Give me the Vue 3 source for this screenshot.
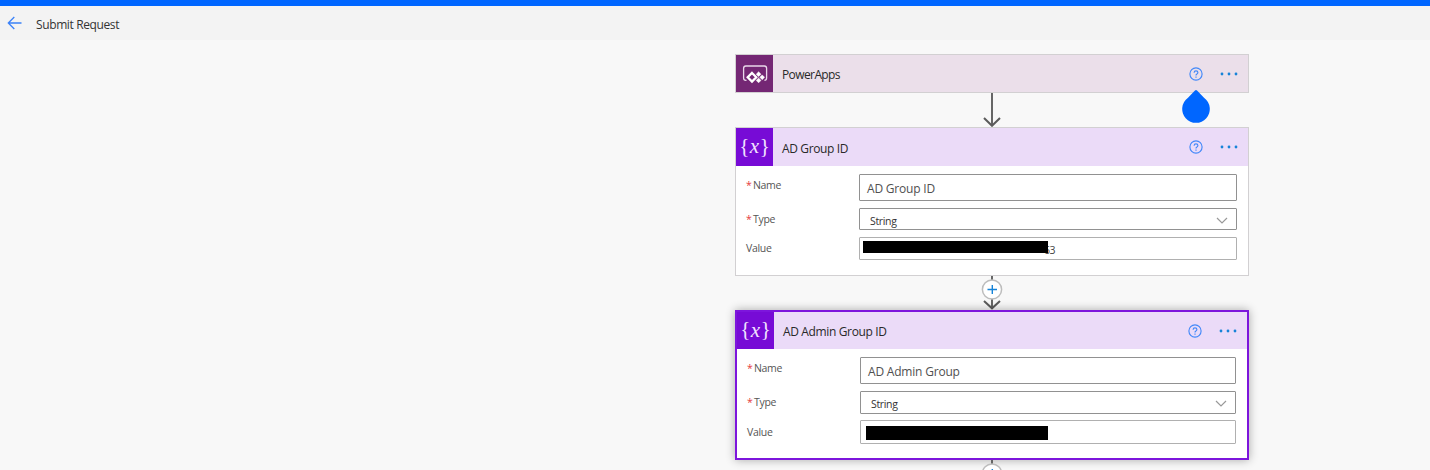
<script setup>
const variables = [
  { title: 'AD Group ID', name: 'AD Group ID', type: 'String', tail: '63', selected: false },
  { title: 'AD Admin Group ID', name: 'AD Admin Group', type: 'String', tail: '', selected: true },
]
</script>

<template>
  <div class="page">
    <div class="accent"></div>
    <header class="topbar">
      <svg class="back" width="16" height="14" viewBox="0 0 16 14">
        <path d="M7.3 1 L1.3 7 L7.3 13 M1.3 7 H14.5" />
      </svg>
      <span class="page-title">Submit Request</span>
    </header>

    <main class="flow">
      <section class="card trigger">
        <div class="head">
          <div class="tile">
            <svg width="38" height="38" viewBox="0 0 38 38">
              <path class="frame" d="M10.5 25.3 H9.8 Q7.6 25.3 7.6 23 V13.3 Q7.6 11 9.8 11 H28.4 Q30.6 11 30.6 13.3 V23 Q30.6 25.3 28.4 25.3" />
              <path class="diamond" d="M16 18 L20.3 22.3 L16 26.6 L11.7 22.3 Z" />
              <path class="chips" d="M22.6 16.8 L25 19.2 L22.6 21.6 L20.2 19.2 Z M26.2 19.9 L28.6 22.3 L26.2 24.7 L23.8 22.3 Z M22.6 23 L25 25.4 L22.6 27.8 L20.2 25.4 Z" />
            </svg>
          </div>
          <span class="title">PowerApps</span>
          <span class="help">
            <svg width="14" height="14" viewBox="0 0 14 14">
              <circle cx="7" cy="7" r="6.1" />
              <path d="M5.1 5.7 Q5.1 3.8 7 3.8 Q8.9 3.8 8.9 5.4 Q8.9 6.3 7.9 6.9 Q7 7.4 7 8.5 M7 9.5 V10.7" />
            </svg>
            <svg class="pin" width="28" height="34" viewBox="0 0 28 34">
              <path d="M14 0 Q15 0 16 1.6 L22 7.8 A13.8 13.8 0 1 1 6 7.8 L12 1.6 Q13 0 14 0 Z" />
            </svg>
          </span>
          <svg class="dots" width="18" height="4" viewBox="0 0 18 4">
            <circle cx="2" cy="2" r="1.4" /><circle cx="9" cy="2" r="1.4" /><circle cx="16" cy="2" r="1.4" />
          </svg>
        </div>
      </section>

      <svg class="link" width="20" height="34" viewBox="0 0 20 34">
        <path class="line" d="M10 0 V32.5" /><path class="tip" d="M2 25 L10 32.8 L18 25" />
      </svg>

      <template v-for="(v, i) in variables" :key="v.title">
        <svg v-if="i > 0" class="link" width="22" height="34" viewBox="0 0 22 34">
          <path class="line" d="M11 0 V32" /><path class="tip" d="M3 25 L11 32.3 L19 25" />
          <circle class="ring" cx="11" cy="13.5" r="9.6" />
          <path class="plus" d="M6.5 13.5 H16 M11.3 9 V18" />
        </svg>
        <section class="card variable" :class="{ selected: v.selected }">
          <div class="head">
            <div class="tile"><span class="brace">{</span><i>x</i><span class="brace">}</span></div>
            <span class="title">{{ v.title }}</span>
            <span class="help">
              <svg width="14" height="14" viewBox="0 0 14 14">
                <circle cx="7" cy="7" r="6.1" />
                <path d="M5.1 5.7 Q5.1 3.8 7 3.8 Q8.9 3.8 8.9 5.4 Q8.9 6.3 7.9 6.9 Q7 7.4 7 8.5 M7 9.5 V10.7" />
              </svg>
            </span>
            <svg class="dots" width="18" height="4" viewBox="0 0 18 4">
              <circle cx="2" cy="2" r="1.4" /><circle cx="9" cy="2" r="1.4" /><circle cx="16" cy="2" r="1.4" />
            </svg>
          </div>
          <div class="body">
            <label class="name-label"><b>*</b>Name</label>
            <div class="box name">{{ v.name }}</div>
            <label><b>*</b>Type</label>
            <div class="box type">
              <span>{{ v.type }}</span>
              <svg width="12" height="7" viewBox="0 0 12 7"><path d="M1 1 L6 6 L11 1" /></svg>
            </div>
            <label class="value-label">Value</label>
            <div class="box value"><span class="redacted"></span><span class="tail">{{ v.tail }}</span></div>
          </div>
        </section>
      </template>

      <svg class="link last" width="22" height="34" viewBox="0 0 22 34">
        <path class="line" d="M11 0 V32" />
        <circle class="ring" cx="11" cy="13.5" r="9.6" />
        <path class="plus" d="M6.5 13.5 H16 M11.3 9 V18" />
      </svg>
    </main>
  </div>
</template>

<style>
body { background: #f8f8f8; overflow: hidden; }
</style>

<style scoped>
* { box-sizing: border-box; }
.page { height: 470px; overflow: hidden; background: #f8f8f8; font-family: "Open Sans", "Noto Sans", sans-serif; color: #333; }
svg { display: block; flex: none; fill: none; }
.accent { height: 6px; background: #0066ff; }
.topbar { height: 34px; background: #f3f3f3; display: flex; align-items: center; padding-left: 7px; }
.back { stroke: #3b82f8; stroke-width: 1.3; margin-bottom: 1px; }
.page-title { margin: 2px 0 0 13px; font-size: 12px; letter-spacing: -0.38px; }
.flow { width: 514px; margin-left: 735px; padding-top: 14px; display: flex; flex-direction: column; align-items: center; }
.card { width: 514px; flex: none; border: 1px solid #d2d0d2; background: #fff; }
.trigger { height: 39px; }
.variable { height: 149px; }
.head { height: 38px; display: flex; align-items: center; background: #ebdbf8; }
.trigger .head { height: 37px; background: #ebdfea; }
.tile { width: 37px; height: 100%; flex: none; display: flex; align-items: center; justify-content: center; background: #770bd6; color: #f2e4ff; font-family: "Liberation Serif", serif; line-height: 36px; }
.trigger .tile { background: #742774; }
.tile i { font-size: 21px; margin: 0 0.5px; padding-bottom: 2px; }
.brace { font-size: 21px; padding-bottom: 3px; }
.frame { stroke: #e9d8e9; stroke-width: 1.3; }
.diamond { fill: #742774; stroke: #fff; stroke-width: 2.3; }
.chips { fill: #fff; stroke: #fff; stroke-width: 0.5; }
.title { flex: 1; margin-left: 9px; padding-top: 2px; font-size: 12px; letter-spacing: -0.37px; white-space: nowrap; color: #292929; }
.trigger .title { letter-spacing: -0.6px; }
.help { position: relative; margin-right: 17px; stroke: #4288f9; stroke-width: 1.15; }
.pin { position: absolute; left: -7px; top: 23px; z-index: 2; fill: #0066ff; stroke: none; }
.dots { margin-right: 10px; fill: #1683d8; }
.link { position: relative; height: 34px; }
.line { stroke: #666; stroke-width: 2; }
.tip { stroke: #5b5b5b; stroke-width: 2; }
.ring { fill: #fff; stroke: #bdbdbd; stroke-width: 1.5; }
.plus { stroke: #1683d8; stroke-width: 1.4; }
.body { display: grid; grid-template-columns: 113px 378px; grid-template-rows: 27px 22px 23px; row-gap: 7px; padding: 8px 0 0 10px; align-items: center; }
label { font-size: 10.5px; letter-spacing: -0.3px; color: #555; }
.name-label { padding-bottom: 5px; }
.value-label { padding-bottom: 1px; }
label b { color: #e5393d; font-weight: 400; margin-right: 1.5px; }
.box { height: 100%; border: 1px solid #919191; border-radius: 1px; display: flex; align-items: center; background: #fff; }
.name { padding: 2px 0 0 7px; font-size: 12px; letter-spacing: -0.2px; color: #505050; }
.type { justify-content: space-between; padding: 3px 8px 0 10px; font-size: 10.5px; letter-spacing: -0.35px; color: #333; }
.type svg { stroke: #999; stroke-width: 1.2; }
.value { border-color: #b0b0b0; padding-left: 3px; font-size: 10.5px; }
.redacted { width: 185px; height: 12px; background: #000; margin-bottom: 3px; z-index: 1; }
.tail { margin-left: -4px; padding-top: 2px; letter-spacing: -0.6px; color: #444; }
.selected { height: 150px; border: 2px solid #7d15dc; box-shadow: 0 0 9px rgba(0, 0, 0, 0.32); position: relative; }
.selected .head { height: 37px; }
.selected .title { letter-spacing: -0.36px; }
.selected .body { grid-template-columns: 113px 376px; grid-template-rows: 27px 23px 24px; row-gap: 6.5px; }
.selected .redacted { width: 182px; height: 14px; margin: 2px 0 0 2px; }
</style>
